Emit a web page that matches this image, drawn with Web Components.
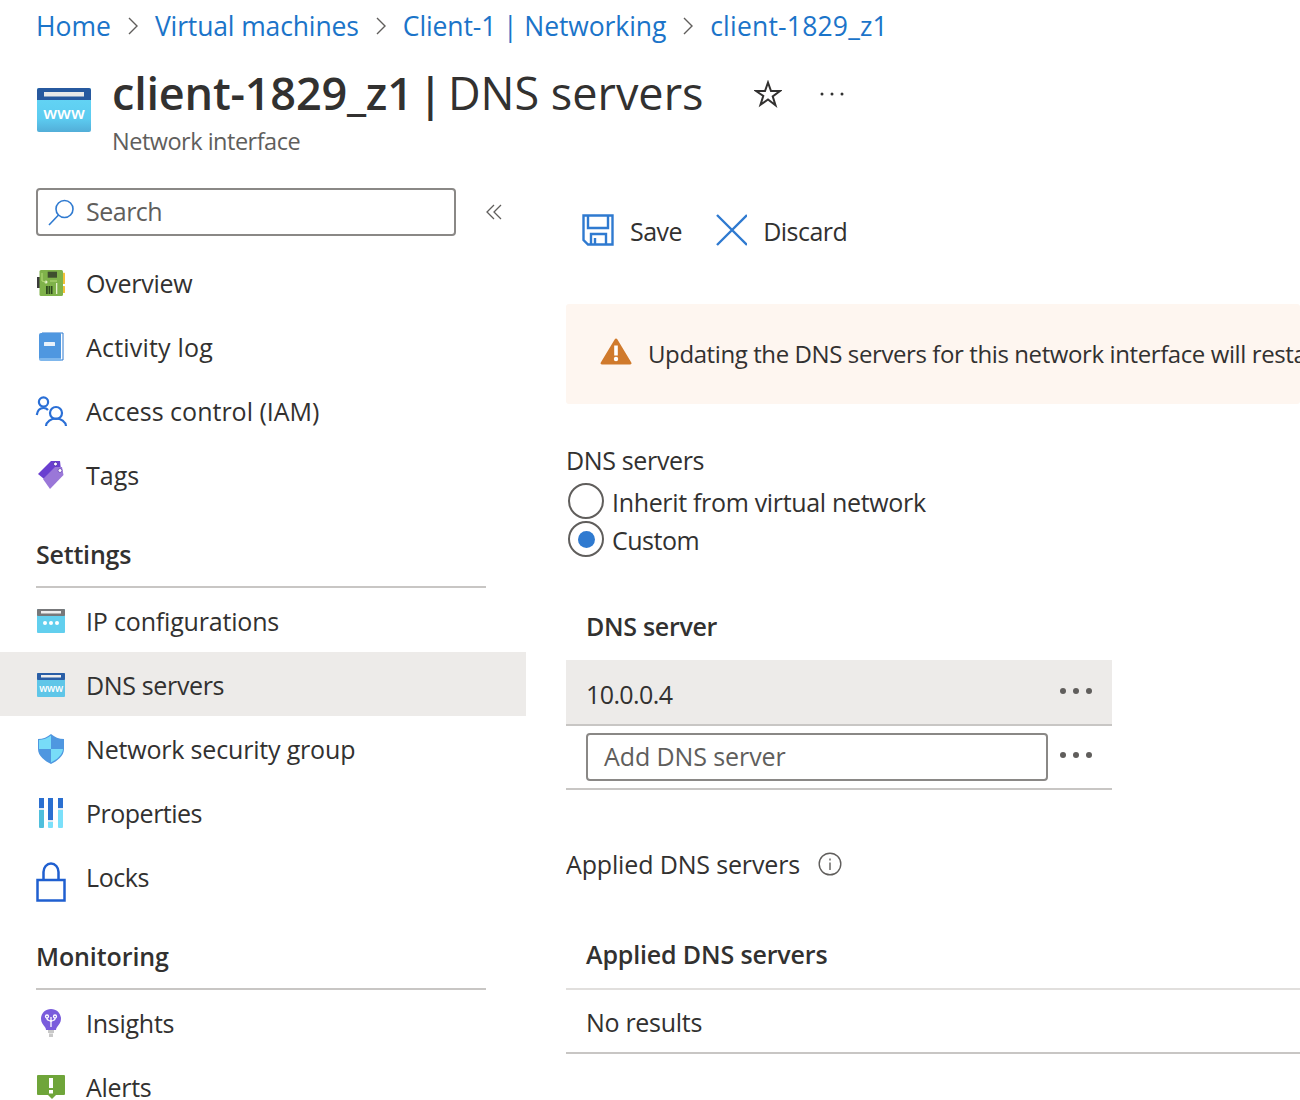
<!doctype html>
<html><head><meta charset="utf-8"><style>
html,body{margin:0;padding:0;background:#fff;overflow:hidden}
body{height:1100px;font-family:"Open Sans","Noto Sans",sans-serif;color:#323130}
</style></head><body>
<az-page>
  <az-breadcrumb slot="crumbs"><a style="letter-spacing:0">Home</a><a style="letter-spacing:-.13px">Virtual machines</a><a style="letter-spacing:-.1px">Client-1 | Networking</a><a style="letter-spacing:.2px">client-1829_z1</a></az-breadcrumb>
  <az-title slot="title" strong="client-1829_z1" sub="Network interface"></az-title>
  <az-nav slot="nav">
    <az-search></az-search>
    <az-item icon="overview" style="letter-spacing:-.25px">Overview</az-item>
    <az-item icon="log" style="letter-spacing:.2px">Activity log</az-item>
    <az-item icon="iam" style="letter-spacing:0">Access control (IAM)</az-item>
    <az-item icon="tags" style="letter-spacing:0">Tags</az-item>
    <az-section style="letter-spacing:-.2px">Settings</az-section>
    <az-item icon="ip" style="letter-spacing:-.18px">IP configurations</az-item>
    <az-item icon="dns" active style="letter-spacing:-.35px">DNS servers</az-item>
    <az-item icon="shield" style="letter-spacing:-.18px">Network security group</az-item>
    <az-item icon="props" style="letter-spacing:-.5px">Properties</az-item>
    <az-item icon="lock" style="letter-spacing:-.4px">Locks</az-item>
    <az-section style="letter-spacing:-.1px">Monitoring</az-section>
    <az-item icon="insights" style="letter-spacing:-.25px">Insights</az-item>
    <az-item icon="alerts" style="letter-spacing:-.3px">Alerts</az-item>
  </az-nav>
  <az-content slot="content">
    <az-toolbar></az-toolbar>
    <az-banner>Updating the DNS servers for this network interface will restart the associated virtual machine.</az-banner>
    <az-radios></az-radios>
    <az-dns-table></az-dns-table>
    <az-applied></az-applied>
  </az-content>
</az-page>
<script>
const icons = {
overview:`<rect x="1" y="11" width="3" height="11" fill="#3b3b3b"/><rect x="26" y="6.700" width="3" height="11.300" rx=".5" fill="#f2c037"/><rect x="26" y="20" width="3" height="7" rx=".5" fill="#f2c037"/><rect x="3.500" y="4" width="23.500" height="26" rx="1.500" fill="#7fb24a"/><rect x="11.700" y="5.700" width="9.300" height="6" fill="#3f4f2e"/><rect x="10" y="20" width="1.800" height="8" fill="#2f4a1f"/><rect x="12.500" y="20" width="1.800" height="8" fill="#2f4a1f"/><rect x="15" y="20" width="1.500" height="8" fill="#2f4a1f"/><rect x="20" y="17" width="1.300" height="11" fill="#e6f0d0"/><circle cx="10" cy="16" r="1.500" fill="#e6f0d0"/><path d="M6 7v8l4 1M14 15h7" stroke="#b7dc7a" fill="none"/>`,
log:`<path d="M6 3h21v27H8" fill="none" stroke="#2f7ad0" stroke-width="1"/><path d="M5 3h19a1 1 0 0 1 1 1v26H5a2 2 0 0 1-2-2V5a2 2 0 0 1 2-2z" fill="#4f97e0"/><rect x="8" y="12" width="11" height="4" rx=".5" fill="#e9f2fb"/><path d="M3 29a2 2 0 0 1 2-1h20v3H5a2 2 0 0 1-2-2z" fill="#7fb7ec"/>`,
iam:`<g fill="none" stroke="#2a6fd6" stroke-width="2.2"><circle cx="7.5" cy="8" r="4.6"/><path d="M0.8 21c.6-4.500 3.200-7 6.700-7 1.800 0 3.400.6 4.500 2"/><circle cx="20" cy="19" r="6"/><path d="M10 32c.5-4.500 5-7.500 10-7.500S29.500 27.500 30 32"/></g>`,
tags:`<path d="M2 16 15 3h9l1 9-12 13z" fill="#6a3fd0"/><path d="M7 21 19 9h7l1.500 8L14 31z" fill="#9a77d8"/><circle cx="19.500" cy="6" r="2" fill="#fff" stroke="#5a35b0"/><circle cx="24" cy="12.500" r="2" fill="#fff" stroke="#7a5ac0"/>`,
ip:`<rect x="1" y="5" width="28" height="24" rx="1" fill="#62cfee"/><rect x="1" y="5" width="28" height="7" rx="1" fill="#77787a"/><rect x="5" y="7" width="20" height="2.500" fill="#eee"/><circle cx="9" cy="19" r="2" fill="#fff"/><circle cx="15" cy="19" r="2" fill="#fff"/><circle cx="21" cy="19" r="2" fill="#fff"/>`,
dns:`<rect x="1" y="5" width="28" height="24" rx="1" fill="#5fc6e8"/><rect x="1" y="5" width="28" height="7" rx="1" fill="#2a5ea6"/><rect x="5" y="7" width="20" height="2.500" fill="#eee"/><text x="15" y="23.500" text-anchor="middle" font-family="Open Sans" font-size="10" font-weight="600" fill="#fff">www</text>`,
shield:`<path d="M2 7c5 0 9.500-2 13-5 3.500 3 8 5 13 5v10c0 7-7 12-13 15C9 29 2 24 2 17z" fill="#4f97e0"/><path d="M15 3.500c-3.500 2.700-7.500 4.300-12 4.500v9h12zM15 17v13.500c5.500-2.800 11.500-7.300 12-13.500z" fill="#78dcf8"/>`,
props:`<rect x="3" y="2" width="5" height="30" rx="1" fill="#4fbfdc"/><rect x="3" y="2" width="5" height="10" fill="#2a6fd0"/><rect x="3" y="12" width="5" height="2" fill="#dfe9f2"/><rect x="12" y="2" width="5" height="30" rx="1" fill="#7be0fa"/><rect x="12" y="2" width="5" height="22" fill="#2a6fd0"/><rect x="12" y="24" width="5" height="2" fill="#dfe9f2"/><rect x="22" y="2" width="5" height="30" rx="1" fill="#7be0fa"/><rect x="22" y="2" width="5" height="10" fill="#2a6fd0"/><rect x="22" y="12" width="5" height="2" fill="#dfe9f2"/>`,
lock:`<g fill="none" stroke="#1f5fd0" stroke-width="2.500"><rect x="1.500" y="20" width="27" height="20.500"/><path d="M7.500 20v-8a7.500 8.500 0 0 1 15 0v8"/></g>`,
insights:`<path d="M15 3c-5.700 0-10 4.300-10 9.800 0 3.600 2 5.700 3.700 8 .8 1 1.300 2.200 1.300 3.200h10c0-1 .5-2.200 1.300-3.200 1.700-2.300 3.700-4.400 3.700-8C25 7.300 20.700 3 15 3z" fill="#7a5cdc"/><path d="M12 24h6v3h-6zM13 27.500h4V31h-4z" fill="#c8c8c8"/><g fill="none" stroke="#fff" stroke-width="1.300"><circle cx="11" cy="10.500" r="1.500"/><circle cx="19" cy="10.500" r="1.500"/><path d="M11 12v1c0 1.500 4 1.500 4 3M19 12v1c0 1.500-4 1.500-4 3M15 11v10"/></g>`,
alerts:`<path d="M1 6a1 1 0 0 1 1-1h26a1 1 0 0 1 1 1v18a1 1 0 0 1-1 1H20l-4 4-4-4H2a1 1 0 0 1-1-1z" fill="#6fa53a"/><rect x="13" y="8" width="4" height="10" fill="#fff"/><rect x="13" y="20" width="4" height="3.500" fill="#fff"/>`
};
function def(name, css, html, init){
  customElements.define(name, class extends HTMLElement{
    constructor(){super();this.attachShadow({mode:'open'});}
    connectedCallback(){
      const h = typeof html==='function'?html(this):html;
      this.shadowRoot.innerHTML=`<style>${css}</style>${h}`;
      if(init)init(this);
    }
  });
}
const dots = `<svg width="34" height="8" viewBox="0 0 34 8" fill="#605e5c"><circle cx="4" cy="4" r="3"/><circle cx="17" cy="4" r="3"/><circle cx="30" cy="4" r="3"/></svg>`;
def('az-page',`
 :host{display:block;width:1300px;height:1100px;overflow:hidden}
 .main{display:grid;grid-template-columns:526px 734px;column-gap:40px;margin-top:24px}
 .crumbs{padding:0 0 0 36px}
`,`<div class="crumbs"><slot name="crumbs"></slot></div><slot name="title"></slot><div class="main"><slot name="nav"></slot><slot name="content"></slot></div>`);
def('az-breadcrumb',`
 :host{display:flex;align-items:center;height:52px;font-size:26.500px}
 ::slotted(a){color:#1b74c9}
 .c{display:flex;align-items:center;gap:15px}
`,`<div class="c"><slot></slot></div>`,el=>{
  const as=[...el.querySelectorAll('a')];
  as.slice(0,-1).forEach(a=>{
    const s=document.createElementNS('http://www.w3.org/2000/svg','svg');
    s.setAttribute('width','14');s.setAttribute('height','20');s.setAttribute('viewBox','0 0 14 20');s.style.flex='none';
    s.innerHTML='<path d="M3 2l8 8-8 8" fill="none" stroke="#605e5c" stroke-width="1.400"/>';
    a.after(s);
  });
});
def('az-title',`
 :host{display:flex;align-items:flex-start;padding-left:37px;height:112px}
 .ic{width:54px;height:44px;margin-top:36px;margin-right:21px;flex:none}
 h1{margin:0;font-size:45px;line-height:60px;font-weight:400;color:#323130;white-space:nowrap;margin-top:11px}
 b{font-weight:600;letter-spacing:-.2px}
 .sep{word-spacing:-6.500px;font-weight:600}
 .sub{font-size:23.500px;letter-spacing:-.5px;line-height:30px;color:#605e5c;margin-top:3px}
 .star{margin:28px 0 0 51px;flex:none}
 .more{margin:40px 0 0 38px;flex:none}
`,el=>`<svg class="ic" viewBox="0 0 54 44"><defs><linearGradient id="g" x1="0" y1="0" x2="0" y2="1"><stop offset="0" stop-color="#66d8f6"/><stop offset=".7" stop-color="#5ccbf0"/><stop offset="1" stop-color="#52aed8"/></linearGradient></defs><rect width="54" height="44" rx="2" fill="url(#g)"/><path d="M0 12V2a2 2 0 0 1 2-2h50a2 2 0 0 1 2 2v10z" fill="#27599f"/><rect x="7" y="4" width="40" height="4.500" fill="#e8e8e8"/><text x="27" y="31" text-anchor="middle" font-family="Open Sans" font-size="17" font-weight="600" fill="#fff">www</text></svg>
 <div><h1><b>${el.getAttribute('strong')}</b><span class="sep"> | </span>DNS servers</h1><div class="sub">${el.getAttribute('sub')}</div></div>
 <svg class="star" width="28" height="28" viewBox="0 0 28 28"><path d="M14 2.500l3 8.500h9l-7.300 5.400 2.800 8.800L14 19.500 6.500 24.700l2.800-8.800L2 11h9z" fill="none" stroke="#323130" stroke-width="2"/></svg>
 <svg class="more" width="24" height="4" viewBox="0 0 24 4" fill="#333"><circle cx="2" cy="2" r="1.500"/><circle cx="12" cy="2" r="1.500"/><circle cx="22" cy="2" r="1.500"/></svg>`);
def('az-nav',`:host{display:block}`,`<slot></slot>`);
def('az-search',`
 :host{display:flex;padding-left:36px;height:62px;align-items:flex-start}
 .box{box-sizing:border-box;width:420px;height:48px;border:2px solid #8a8886;border-radius:4px;display:flex;align-items:center;gap:10px;padding-left:10px;font-size:25px;color:#605e5c}
 .box span{letter-spacing:-.5px;position:relative;top:-1px}
 .cv{margin:14px 0 0 29px}
`,`<div class="box"><svg width="28" height="28" viewBox="0 0 28 28" fill="none" stroke="#2f7ad0" stroke-width="1.600"><circle cx="16.500" cy="11" r="8.500"/><path d="M10.500 17L1 27"/></svg><span>Search</span></div>
 <svg class="cv" width="18" height="20" viewBox="0 0 18 20" fill="none" stroke="#605e5c" stroke-width="1.300"><path d="M9 3L2 10l7 7M16 3L9 10l7 7"/></svg>`);
def('az-item',`
 :host{display:flex;height:64px;align-items:center;padding-left:36px;font-size:25px;white-space:nowrap;color:#323130}
 :host([active]){background:#edebe9}
 svg{width:32px;height:32px;overflow:visible;margin-right:18px;flex:none}
 span{position:relative;top:1px}
`,el=>`<svg viewBox="0 0 32 32">${icons[el.getAttribute('icon')]}</svg><span><slot></slot></span>`);
def('az-section',`
 :host{display:block;box-sizing:border-box;height:82px;margin-left:36px;width:450px;border-bottom:2px solid #c8c6c4;font-size:25px;font-weight:600;padding-top:28px;line-height:40px}
`,`<slot></slot>`);
def('az-content',`:host{display:block;overflow:hidden}`,`<slot></slot>`);
def('az-toolbar',`
 :host{display:flex;align-items:center;height:84px;padding-left:16px;font-size:25px;color:#323130}
 .b{display:flex;align-items:center;gap:16px;margin-right:33px}
 span{position:relative;top:1px;letter-spacing:-.5px}
`,`<div class="b"><svg width="32" height="32" viewBox="0 0 32 32" fill="none" stroke="#2f7ad0" stroke-width="2.400"><path d="M1.500 1.500h29v29H6l-4.500-4.500z"/><path d="M6 1.500V14h20V1.500M9 30.500V20h15v10.500M13 24v6"/></svg><span>Save</span></div>
 <div class="b"><svg width="32" height="32" viewBox="0 0 32 32" fill="none" stroke="#2f7ad0" stroke-width="2.400"><path d="M2 1L32 31M32 1L2 31"/></svg><span>Discard</span></div>`);
def('az-banner',`
 :host{display:flex;align-items:center;height:100px;margin-top:32px;background:#fef6f0;border-radius:3px;padding-left:34px;font-size:24px;letter-spacing:-.4px;white-space:nowrap;overflow:hidden;color:#323130}
 svg{flex:none;margin-right:16px;margin-bottom:7px}
 span{position:relative;top:-1px}
`,`<svg width="32" height="28" viewBox="0 0 32 28"><path d="M16 1.500c.5 0 1 .2 1.300.8l14 23.200c.6 1-.1 2-1.200 2H2c-1.100 0-1.800-1-1.200-2l14-23.200c.3-.6.700-.8 1.200-.8z" fill="#d07a2c"/><rect x="14.200" y="8.500" width="3.600" height="10" fill="#fff"/><circle cx="16" cy="22" r="2.200" fill="#fff"/></svg><span><slot></slot></span>`);
def('az-radios',`
 :host{display:block;margin-top:37px;font-size:25px}
 .l{height:41px;line-height:38px;letter-spacing:-.35px}
 .r{display:flex;align-items:center;height:38px}
 .r span{position:relative;top:1px}
 i{box-sizing:border-box;width:36px;height:36px;border:2px solid #605e5c;border-radius:50%;margin:0 8px 0 2px;display:flex;align-items:center;justify-content:center;flex:none}
 i.on::after{content:"";width:17px;height:17px;border-radius:50%;background:#2f7ad0}
`,`<div class="l">DNS servers</div><div class="r"><i></i><span style="letter-spacing:-.33px">Inherit from virtual network</span></div><div class="r"><i class="on"></i><span style="letter-spacing:-.5px">Custom</span></div>`);
def('az-dns-table',`
 :host{display:block;width:546px;margin-top:32px;font-size:25px}
 .h{font-weight:600;height:70px;line-height:72px;padding-left:20px;box-sizing:border-box;letter-spacing:-.3px}
 .row{display:flex;align-items:center;height:64px;box-sizing:border-box;border-bottom:2px solid #c8c6c4;padding-left:20px}
 .row.sel{background:#edebe9;height:66px}
 .row .t{flex:1;position:relative;top:2px;letter-spacing:-.6px}
 .row svg{margin-right:19px;position:relative;top:-1px;flex:none}
 .in{box-sizing:border-box;width:462px;height:48px;border:2px solid #8a8886;border-radius:4px;padding-left:16px;display:flex;align-items:center;color:#605e5c;margin-right:11px;letter-spacing:-.1px}
 .in span{position:relative;top:-1px}
 .row2 svg{top:-2px}
`,`<div class="h">DNS server</div>
 <div class="row sel"><span class="t">10.0.0.4</span>${dots}</div>
 <div class="row row2"><div class="in"><span>Add DNS server</span></div>${dots}</div>`);
def('az-applied',`
 :host{display:block;font-size:25px}
 .l{display:flex;align-items:center;gap:18px;margin-top:54px;height:40px;letter-spacing:-.15px}
 .h{font-weight:600;height:71px;line-height:70px;padding-left:20px;margin-top:35px;box-sizing:border-box;border-bottom:2px solid #e1dfdd;letter-spacing:-.15px}
 .h2{height:64px;line-height:64px;padding-left:20px;box-sizing:border-box;border-bottom:2px solid #c8c6c4;letter-spacing:-.3px}
`,`<div class="l"><span>Applied DNS servers</span><svg width="24" height="24" viewBox="0 0 24 24" fill="none" stroke="#605e5c" stroke-width="1.400"><circle cx="12" cy="12" r="10.800"/><path d="M12 10.500v7.500M12 6.500v2"/></svg></div>
 <div class="h">Applied DNS servers</div><div class="h2">No results</div>`);
</script>
</body></html>
